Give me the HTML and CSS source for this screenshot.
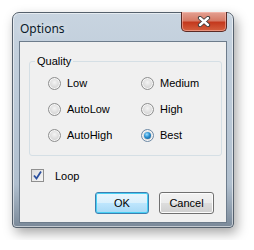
FILE: index.html
```html
<!DOCTYPE html>
<html>
<head>
  <title>Options</title>
  <meta http-equiv="Content-Type" content="text/html; charset=UTF-8">
  <link rel="stylesheet" href="styles.css">
</head>
<body>
  <div class="window">
    <div class="titlebar">
      <span class="title">Options</span>
      <button class="close" type="button">
        <svg width="14" height="11" viewBox="0 0 14 11">
          <path d="M3 2 L11 9 M11 2 L3 9" stroke="#3a3a3a" stroke-width="4.2" stroke-linecap="round"/>
          <path d="M3 2 L11 9 M11 2 L3 9" stroke="#ffffff" stroke-width="2.4" stroke-linecap="round"/>
        </svg>
      </button>
    </div>

    <div class="client">
      <fieldset class="group">
        <legend>Quality</legend>
        <div class="options">
          <label class="option"><span class="radio"></span>Low</label>
          <label class="option"><span class="radio"></span>Medium</label>
          <label class="option"><span class="radio"></span>AutoLow</label>
          <label class="option"><span class="radio"></span>High</label>
          <label class="option"><span class="radio"></span>AutoHigh</label>
          <label class="option"><span class="radio checked"></span>Best</label>
        </div>
      </fieldset>

      <label class="loop">
        <span class="checkbox">
          <svg width="11" height="11" viewBox="0 0 11 11">
            <path d="M2 5.5 L4.5 8.5 L9 1.5" stroke="#2a4f9e" stroke-width="1.8" fill="none"/>
          </svg>
        </span>
        Loop
      </label>

      <div class="buttons">
        <button type="button" class="btn default">OK</button>
        <button type="button" class="btn">Cancel</button>
      </div>
    </div>
  </div>
</body>
</html>
```

FILE: styles.css
```css
body {
  margin: 0;
  padding: 12px;
  background-color: #ffffff;
  font-family: "Liberation Sans", Arial, sans-serif;
  font-size: 11px;
  color: #000000;
}

.window {
  width: 208px;
  height: 209px;
  padding: 0 6px 5px 6px;
  border: 1px solid #55606c;
  border-radius: 7px 7px 4px 4px;
  background: linear-gradient(to bottom, #c8d4e0 0%, #bccad8 40%, #b0bfce 80%, #7a8999 100%);
  box-shadow: 3px 5px 12px rgba(0, 0, 0, 0.35), inset 0 0 0 1px rgba(255, 255, 255, 0.55);
}

.titlebar {
  height: 28px;
  display: flex;
  justify-content: space-between;
  align-items: flex-start;
}

.title {
  margin-top: 7px;
  margin-left: 1px;
  font-family: "Noto Sans", "Open Sans", sans-serif;
  font-size: 12px;
  color: #0a1a2a;
  text-shadow: 0 0 6px rgba(255, 255, 255, 0.9);
}

.close {
  width: 46px;
  height: 20px;
  margin-top: -1px;
  padding: 0;
  border: 1px solid #5a2a25;
  border-top: none;
  border-radius: 0 0 5px 5px;
  background: linear-gradient(to bottom, #e3a193 0%, #d67a66 45%, #c4391e 55%, #d4603f 100%);
  box-shadow: inset 0 0 0 1px rgba(255, 200, 190, 0.5);
  display: flex;
  align-items: center;
  justify-content: center;
}

.client {
  height: 182px;
  box-sizing: border-box;
  border: 1px solid #6d7c8c;
  background-color: #f0f0f0;
  padding: 13px 0 0 9px;
}

.group {
  width: 187px;
  height: 101px;
  box-sizing: border-box;
  margin: 0;
  padding: 2px 0 0 0;
  border: 1px solid #d5dfe5;
  border-radius: 3px;
}

.group legend {
  margin-left: 5px;
  padding: 0 2px;
  line-height: 13px;
}

.options {
  display: grid;
  grid-template-columns: 93px 80px;
  grid-auto-rows: 26px;
  padding-left: 18px;
}

.option {
  display: flex;
  align-items: center;
}

.radio {
  width: 11px;
  height: 11px;
  margin-right: 6px;
  border: 1px solid #8e8f8f;
  border-radius: 50%;
  background: radial-gradient(circle at 50% 40%, #f4f4f4 0%, #d8d8d8 60%, #c4c4c4 100%);
  box-shadow: inset 0 0 0 1px #f7f7f7;
  position: relative;
}

.radio.checked {
  border-color: #6e8aa6;
}

.radio.checked::after {
  content: "";
  position: absolute;
  left: 2px;
  top: 2px;
  width: 7px;
  height: 7px;
  border-radius: 50%;
  background: radial-gradient(circle at 40% 35%, #9fe0ff 0%, #2a8fd0 45%, #0c4f86 100%);
}

.loop {
  display: flex;
  align-items: center;
  margin: 13px 0 0 2px;
  height: 13px;
}

.checkbox {
  width: 11px;
  height: 11px;
  margin-right: 11px;
  border: 1px solid #8f8f8f;
  background: linear-gradient(to bottom right, #dcdcdc, #f6f6f6);
  display: flex;
  align-items: center;
  justify-content: center;
}

.buttons {
  display: flex;
  gap: 10px;
  margin: 10px 0 0 66px;
}

.btn {
  height: 22px;
  padding: 0;
  font-family: "Liberation Sans", Arial, sans-serif;
  font-size: 11px;
  color: #000000;
  border: 1px solid #707070;
  border-radius: 3px;
  background: linear-gradient(to bottom, #f2f2f2 0%, #ebebeb 50%, #dddddd 51%, #cfcfcf 100%);
  box-shadow: inset 0 0 0 1px #fcfcfc;
}

.btn.default {
  width: 54px;
  border-color: #3c7fb1;
  background: linear-gradient(to bottom, #eaf6fd 0%, #d9f0fc 50%, #bee6fd 51%, #a7d9f5 100%);
  box-shadow: inset 0 0 0 1px #48d0f4;
}

.btn:not(.default) {
  width: 55px;
}
```
